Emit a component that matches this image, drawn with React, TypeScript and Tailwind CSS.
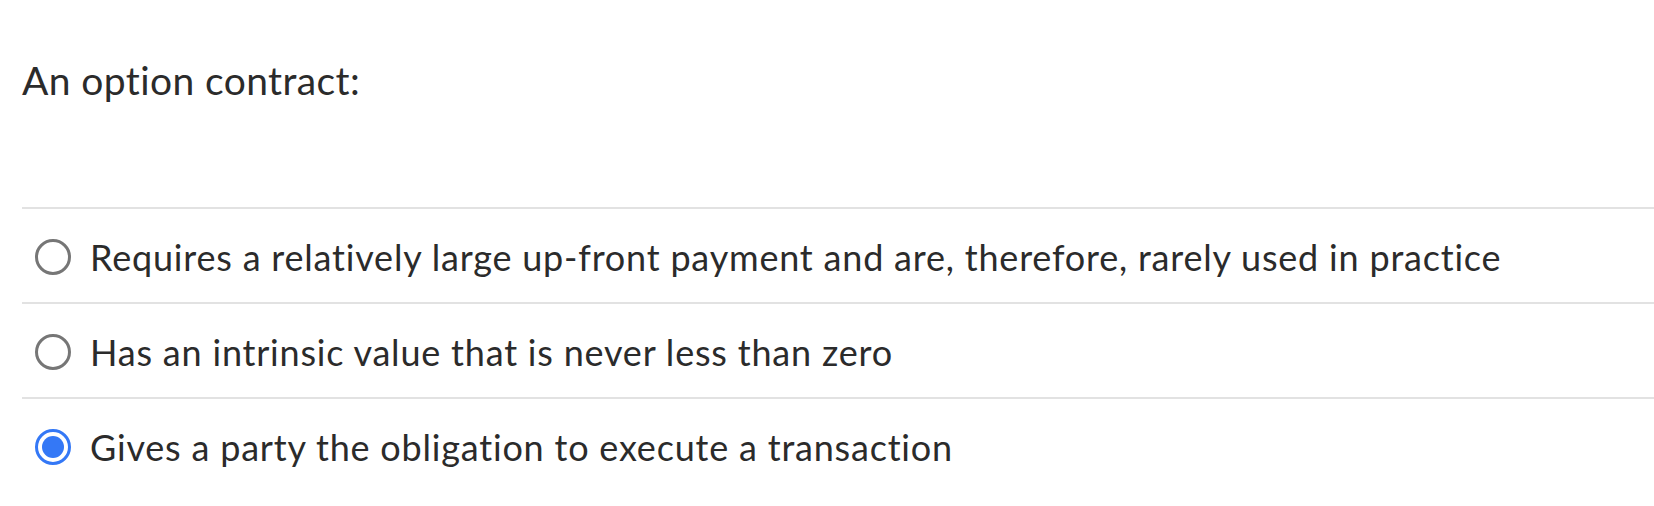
import React from "react";

const options = [
  "Requires a relatively large up-front payment and are, therefore, rarely used in practice",
  "Has an intrinsic value that is never less than zero",
  "Gives a party the obligation to execute a transaction",
];

function Radio({ checked }: { checked: boolean }) {
  if (checked) {
    return (
      <span className="flex h-[36px] w-[36px] shrink-0 items-center justify-center rounded-full border-[3px] border-[#3478f6] bg-white">
        <span className="h-[22px] w-[22px] rounded-full bg-[#3478f6]" />
      </span>
    );
  }
  return <span className="h-[36px] w-[36px] shrink-0 rounded-full border-[3px] border-[#767676] bg-white" />;
}

export default function App() {
  const selected = 2;
  return (
    <div className="h-[506px] w-full overflow-hidden bg-white pl-[22px] font-['Lato',sans-serif] text-[#2b2b2b] [font-variant-ligatures:none]">
      <div className="pt-[54px] text-[39px] leading-[52px] tracking-[0.4px]">An option contract:</div>
      <div className="mt-[101px]">
        {options.map((text, i) => (
          <div
            key={text}
            className="flex h-[95px] items-center gap-[19px] border-t-2 border-[#e2e2e2] pl-[13px] pt-[3px]"
          >
            <Radio checked={i === selected} />
            <span className="text-[36px] leading-none tracking-[0.8px]">{text}</span>
          </div>
        ))}
      </div>
    </div>
  );
}
